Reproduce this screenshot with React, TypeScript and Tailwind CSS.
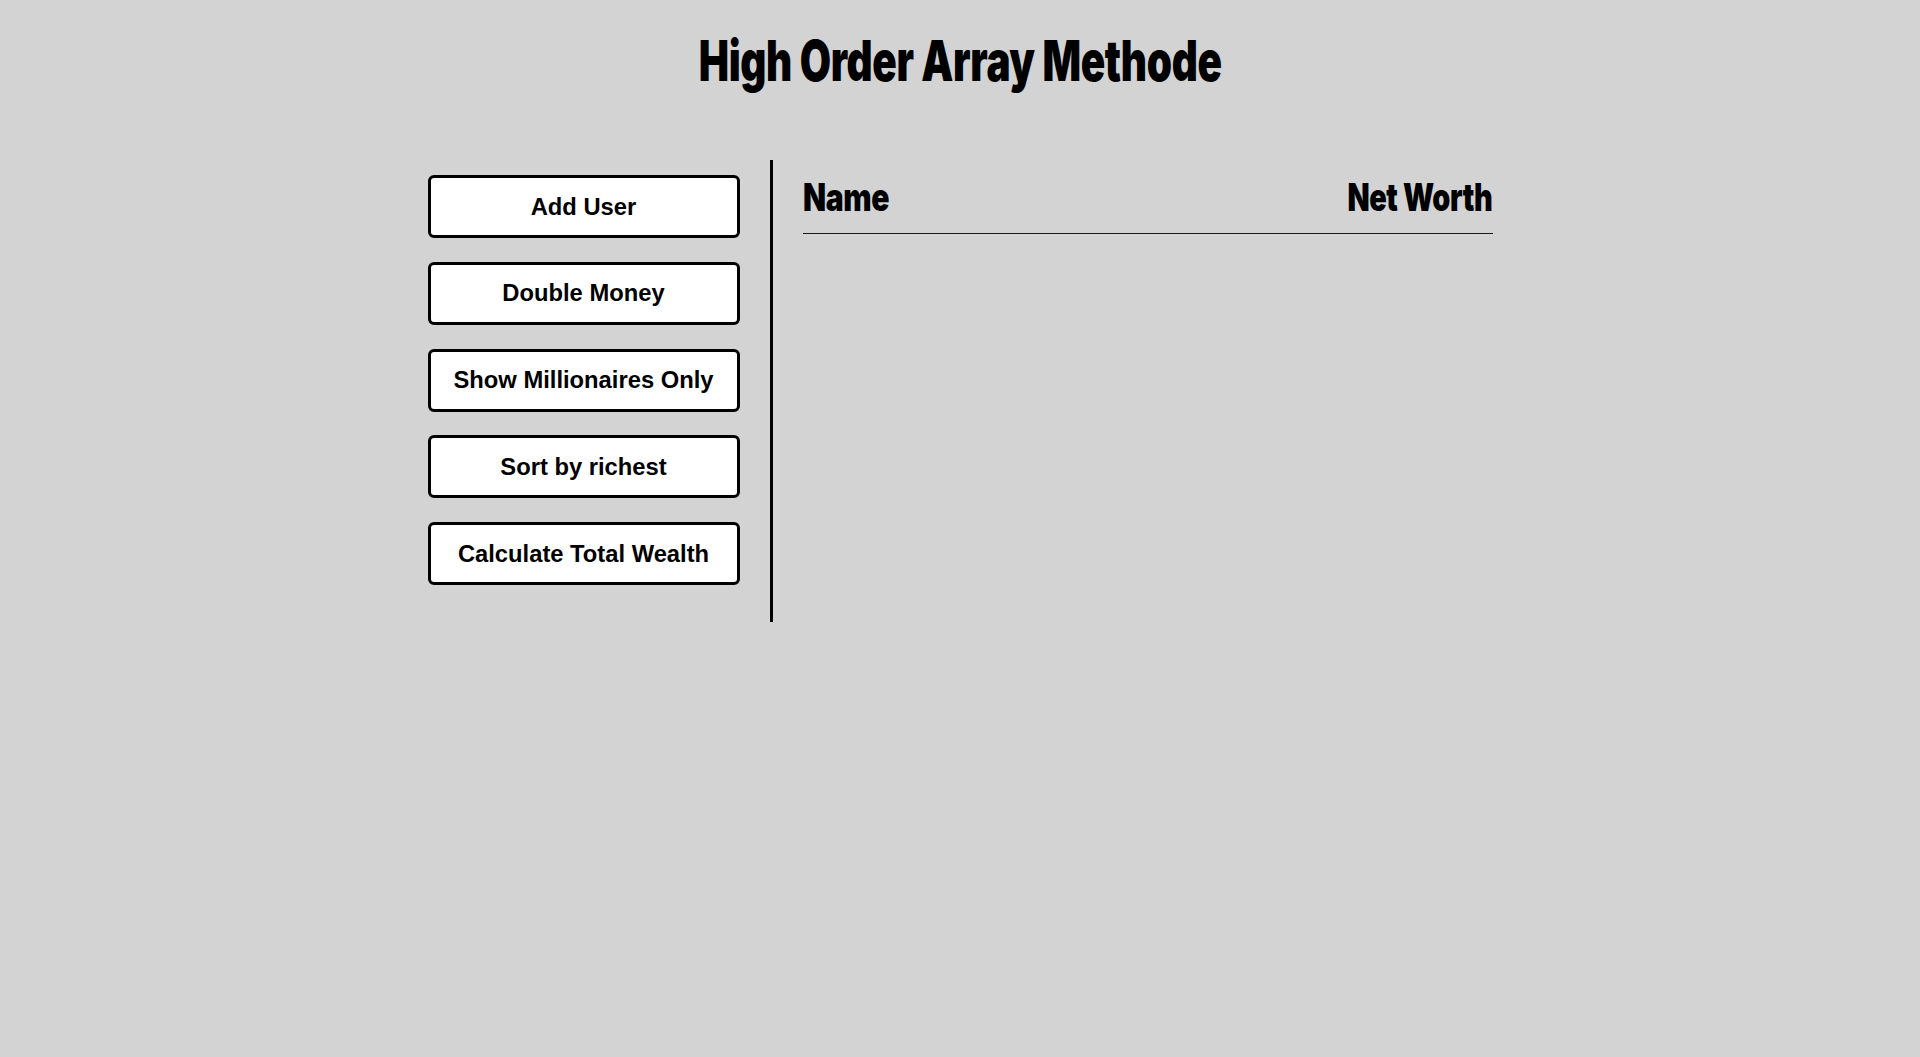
import React from "react";

const buttons = [
  "Add User",
  "Double Money",
  "Show Millionaires Only",
  "Sort by richest",
  "Calculate Total Wealth",
];

// Impact is not installed, so a heavy face squeezed sideways stands in for it
const heavy = { fontFamily: "Inter, 'DejaVu Sans', sans-serif" };

export default function App() {
  return (
    <div className="min-h-screen bg-[#d3d3d3] text-black">
      <h1
        className="flex justify-center pt-[33px] text-[56px] font-black leading-none"
        style={heavy}
      >
        <span className="inline-block scale-x-[0.722] tracking-[-0.5px]">
          High Order Array Methode
        </span>
      </h1>

      <div className="mt-[71px] flex justify-center">
        <div className="flex w-[345px] flex-col gap-[23.75px] border-r-[3px] border-black pr-[30px] pt-[15px] pb-[37px]">
          {buttons.map((label) => (
            <button
              key={label}
              className="h-[63px] w-[312px] rounded-[6px] border-[3px] border-black bg-white text-[23.75px] font-bold text-black"
              style={{ fontFamily: "'Liberation Sans', Arial, sans-serif" }}
            >
              {label}
            </button>
          ))}
        </div>

        <div className="w-[720px] pl-[30px]">
          <div
            className="mt-[17.7px] flex items-start justify-between border-b border-[#1a1a1a] pb-[17px] text-[38.5px] font-black leading-none"
            style={heavy}
          >
            <span className="inline-block origin-left scale-x-[0.78] tracking-[-0.5px]">
              Name
            </span>
            <span className="inline-block origin-right scale-x-[0.75] tracking-[-0.5px]">
              Net Worth
            </span>
          </div>
        </div>
      </div>
    </div>
  );
}
